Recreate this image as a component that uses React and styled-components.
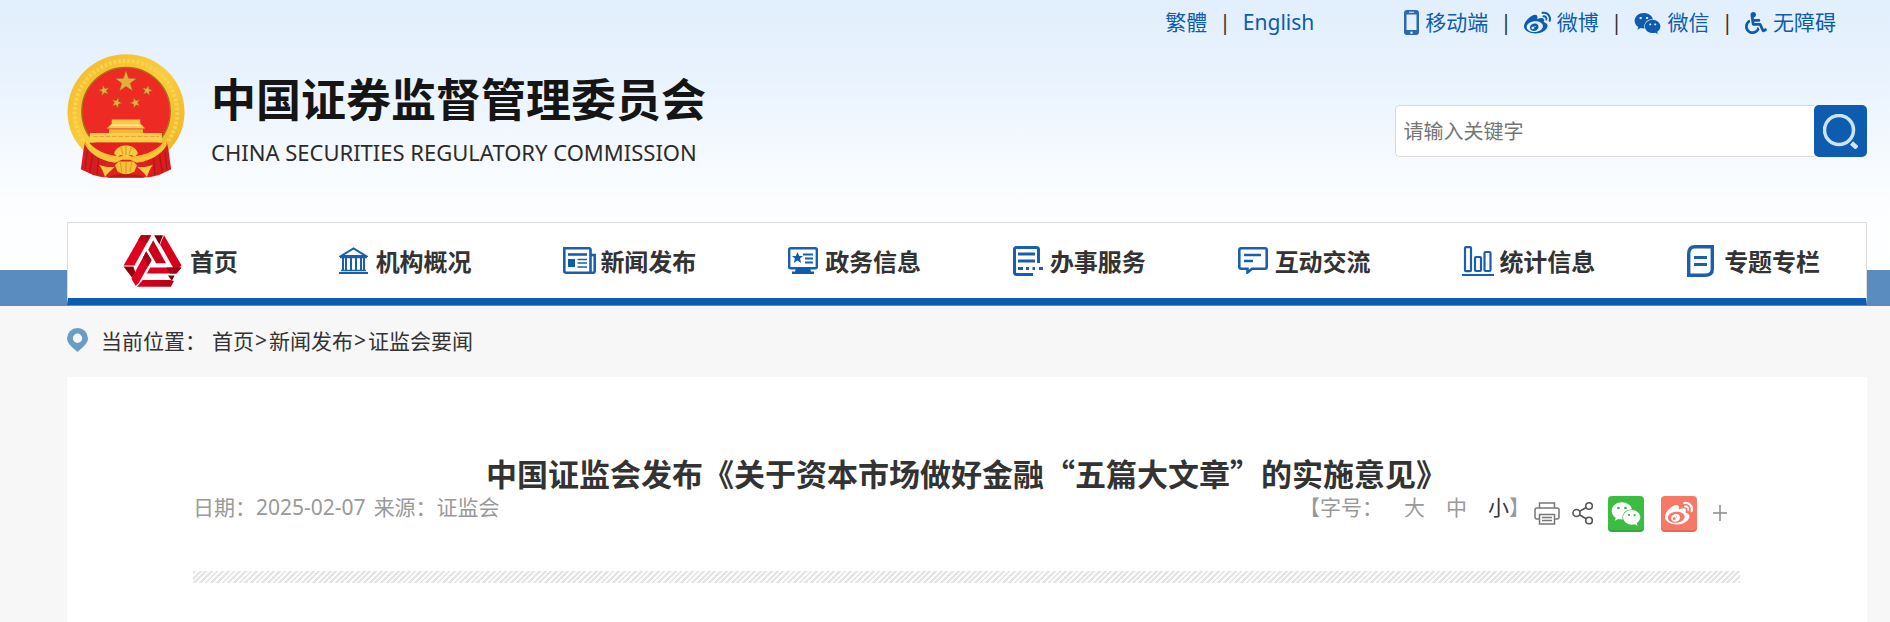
import styled, { createGlobalStyle } from "styled-components";
import { FaWeibo, FaWeixin, FaWheelchair } from "react-icons/fa";

const navItems = [
  { label: "首页", icon: HomeIcon, slot: 67 },
  { label: "机构概况", icon: BankIcon },
  { label: "新闻发布", icon: NewsIcon },
  { label: "政务信息", icon: ScreenIcon },
  { label: "办事服务", icon: ServiceIcon },
  { label: "互动交流", icon: ChatIcon },
  { label: "统计信息", icon: ChartIcon },
  { label: "专题专栏", icon: TopicIcon },
];

const App = () => {
  return (
    <>
      <GlobalStyle />
      <Page>
        <Header>
          <TopBar>
            <TopGroup>
              <TopLink href="#">繁體</TopLink>
              <Divider>|</Divider>
              <TopLink href="#">English</TopLink>
            </TopGroup>
            <TopGroup>
              <TopLink href="#">
                <PhoneIcon />
                移动端
              </TopLink>
              <Divider>|</Divider>
              <TopLink href="#">
                <FaWeibo size={27} />
                微博
              </TopLink>
              <Divider>|</Divider>
              <TopLink href="#">
                <FaWeixin size={27} />
                微信
              </TopLink>
              <Divider>|</Divider>
              <TopLink href="#">
                <FaWheelchair size={22} />
                无障碍
              </TopLink>
            </TopGroup>
          </TopBar>
          <Banner>
            <Brand href="#">
              <Emblem />
              <BrandText>
                <BrandName>中国证券监督管理委员会</BrandName>
                <BrandSub>CHINA SECURITIES REGULATORY COMMISSION</BrandSub>
              </BrandText>
            </Brand>
            <Search onSubmit={(e) => e.preventDefault()}>
              <SearchInput
                type="text"
                aria-label="请输入关键字"
                placeholder="请输入关键字"
              />
              <SearchButton type="submit" aria-label="搜索">
                <SearchIcon />
              </SearchButton>
            </Search>
          </Banner>
          <Nav>
            {navItems.map(({ label, icon: Icon, slot }) => (
              <NavLink href="#" key={label}>
                <IconSlot $width={slot}>
                  <Icon />
                </IconSlot>
                {label}
              </NavLink>
            ))}
          </Nav>
        </Header>
        <Main>
          <Breadcrumb>
            <PinIcon />
            <Current>当前位置：</Current>
            <a href="#">首页</a>
            <Arrow>&gt;</Arrow>
            <a href="#">新闻发布</a>
            <Arrow>&gt;</Arrow>
            <a href="#">证监会要闻</a>
          </Breadcrumb>
          <Article>
            <Title>中国证监会发布《关于资本市场做好金融“五篇大文章”的实施意见》</Title>
            <Meta>
              <Source>
                <span>日期：2025-02-07</span>
                <span>来源：证监会</span>
              </Source>
              <Tools>
                <FontSize>
                  <span>【字号：</span>
                  <SizeButton type="button">大</SizeButton>
                  <SizeButton type="button">中</SizeButton>
                  <span>
                    <SizeButton type="button" $active>
                      小
                    </SizeButton>
                    】
                  </span>
                </FontSize>
                <Share>
                  <ToolButton type="button" aria-label="打印">
                    <PrintIcon />
                  </ToolButton>
                  <ToolButton type="button" aria-label="分享">
                    <ShareIcon />
                  </ToolButton>
                  <ShareTile type="button" aria-label="微信" $color="#3bbd41">
                    <FaWeixin size={30} />
                  </ShareTile>
                  <ShareTile type="button" aria-label="微博" $color="#f67968">
                    <FaWeibo size={28} />
                  </ShareTile>
                  <ToolButton type="button" aria-label="更多">
                    <PlusIcon />
                  </ToolButton>
                </Share>
              </Tools>
            </Meta>
            <Stripe />
          </Article>
        </Main>
      </Page>
    </>
  );
};

function Star({ x, y, r, turn = 0 }) {
  const points = [];
  for (let i = 0; i < 10; i++) {
    const radius = i % 2 ? r * 0.4 : r;
    const angle = (i * Math.PI) / 5 - Math.PI / 2;
    points.push(`${radius * Math.cos(angle)},${radius * Math.sin(angle)}`);
  }
  return (
    <polygon
      points={points.join(" ")}
      transform={`translate(${x} ${y}) rotate(${turn})`}
      fill="#e3ae3c"
      stroke="#9c5a1c"
      strokeWidth="1.5"
    />
  );
}

function Emblem() {
  return (
    <svg width="118" height="124" viewBox="52 41 354 373" aria-hidden="true">
      <defs>
        <linearGradient id="gold" x1="0" y1="0" x2="1" y2="1">
          <stop offset="0" stopColor="#f3b92b" />
          <stop offset="0.5" stopColor="#f9cd3e" />
          <stop offset="1" stopColor="#eeb024" />
        </linearGradient>
      </defs>
      <path
        d="M229 42C327 42 405 120 405 216C405 262 386 303 356 332L306 378H152L102 332C72 303 53 262 53 216C53 120 131 42 229 42Z"
        fill="url(#gold)"
      />
      <circle cx="229" cy="216" r="154" fill="none" stroke="#f9d24e" strokeWidth="12" strokeDasharray="9 5" />
      <circle cx="229" cy="214" r="133" fill="#ee2a24" stroke="#a8701a" strokeWidth="4" />
      <Star x={229} y={125} r={34} />
      <Star x={163} y={151} r={17} turn={-12} />
      <Star x={293} y={151} r={17} turn={12} />
      <Star x={201} y={188} r={17} turn={20} />
      <Star x={257} y={188} r={17} turn={-20} />
      <path d="M186 238H272V250L287 265H171L186 250Z" fill="#f8c948" />
      <path d="M188 252H270L278 258H180Z" fill="#ffe58a" />
      <path d="M178 267H280V280H178Z" fill="#f0b93a" />
      <path d="M121 279H337V307H117Z" fill="#f9cf4b" />
      <path d="M130 289H328" stroke="#e5a62c" strokeWidth="3" strokeDasharray="14 5" />
      <path d="M118 308H340C316 336 276 350 229 350C182 350 142 336 118 308Z" fill="#e3221f" />
      <path d="M106 306C116 330 146 348 190 358L174 366L158 412L130 405L93 388C98 362 99 332 106 306Z" fill="#d91d1e" />
      <path d="M352 306C342 330 312 348 268 358L284 366L300 412L328 405L365 388C360 362 359 332 352 306Z" fill="#d91d1e" />
      <path d="M112 334L106 388M128 344L120 398M146 354L142 404M346 334L352 388M330 344L338 398M312 354L316 404" stroke="#b5141a" strokeWidth="4" />
      <path d="M150 378C190 352 268 352 308 378L300 412H158Z" fill="#e0201f" />
      <path d="M104 306C122 330 160 349 199 358L216 348H242L259 358C298 349 336 330 354 306C348 336 304 364 262 368L240 358H218L196 368C154 364 110 336 104 306Z" fill="#f7c53a" />
      <path d="M193 340C198 324 212 316 229 316C246 316 260 324 265 340L256 349L243 345L229 351L215 345L202 349Z" fill="#f8ca40" />
      <path d="M229 318V345M213 322L220 342M245 322L238 342" stroke="#d99622" strokeWidth="3" />
      <path d="M196 376L206 364H252L262 376L254 395L229 405L204 395Z" fill="#f5c237" />
      <path d="M212 368L217 396M229 366V402M246 368L241 396" stroke="#d99622" strokeWidth="3" />
      <path d="M148 374C166 382 182 382 196 380C184 391 171 400 166 412C162 397 156 384 148 374Z" fill="#f8cd45" />
      <path d="M310 374C292 382 276 382 262 380C274 391 287 400 292 412C296 397 302 384 310 374Z" fill="#f8cd45" />
      <path d="M172 413C192 399 266 399 286 413Z" fill="#b9151b" />
    </svg>
  );
}

function HomeIcon() {
  return (
    <svg width="59" height="52" viewBox="370 68 178 158" aria-hidden="true">
      <defs>
        <linearGradient id="redA" x1="0" y1="0" x2="1" y2="0">
          <stop offset="0" stopColor="#e3001f" />
          <stop offset="1" stopColor="#b00015" />
        </linearGradient>
      </defs>
      <path d="M424 69H455L404 161H371Z" fill="#e00020" />
      <path d="M424 69H455L442 92L415 84Z" fill="#b30014" />
      <path d="M371 164H401L407 182L397 198Z" fill="#8f000d" />
      <path d="M464 69H491L480 97Z" fill="#7d0009" />
      <path d="M494 69L547 160L530 182L482 97Z" fill="#d6001d" />
      <path d="M461 84L500 154H470L446 113Z" fill="#c90019" />
      <path d="M440 118L456 145L418 212L408 223L395 201Z" fill="#df001f" />
      <path d="M440 118L456 145L446 163L430 136Z" fill="#a80012" />
      <path d="M452 167H547L532 185H442Z" fill="#dd001e" />
      <path d="M502 167H547L532 185H512Z" fill="#9e0010" />
      <path d="M429 205H513L524 208L515 225H412Z" fill="url(#redA)" />
      <path d="M506 191H526L518 207Z" fill="#7d0009" />
    </svg>
  );
}

function BankIcon() {
  return (
    <svg width="29" height="27" viewBox="0 0 29 27" fill="none" stroke="#1a5fae" aria-hidden="true">
      <path d="M2 9L14.500 1.500L27 9Z" strokeWidth="2" />
      <path d="M1 10.500H28M2 23.500H27" strokeWidth="1.700" />
      <path d="M0 26H29" strokeWidth="2" />
      <path d="M4 11V24M7 11V24M12 11V24M17 11V24M22 11V24M25 11V24" strokeWidth="2" />
    </svg>
  );
}

function NewsIcon() {
  return (
    <svg width="33" height="27" viewBox="0 0 33 27" fill="none" stroke="#1a5fae" aria-hidden="true">
      <path d="M27 25.700H3Q1.300 25.700 1.300 24V1.300H26Q27.500 1.300 27.500 3V25.700H30Q31.700 25.700 31.700 24V8H28" strokeWidth="2.600" />
      <path d="M5 7.500H24" strokeWidth="2.600" />
      <rect x="5" y="12" width="7" height="8" fill="#0d5cb0" stroke="none" />
      <path d="M14.500 12.500H24M14.500 16H24M14.500 20H24" strokeWidth="1.400" />
    </svg>
  );
}

function ScreenIcon() {
  return (
    <svg width="30" height="27" viewBox="0 0 30 27" fill="none" stroke="#1a5fae" aria-hidden="true">
      <rect x="1.200" y="1.200" width="27.600" height="20" rx="1.500" strokeWidth="2.400" />
      <path d="M9.500 5L11.200 9H15L12 11.500L13.200 16L9.500 13.500L5.800 16L7 11.500L4 9H7.800Z" fill="#0d5cb0" stroke="none" />
      <path d="M15 7.500H25M17 11.500H25M17 15.500H25" strokeWidth="1.900" />
      <path d="M8 21H22L23 24.500H26V27H4V24.500H7Z" fill="#0d5cb0" stroke="none" />
    </svg>
  );
}

function ServiceIcon() {
  return (
    <svg width="30" height="30" viewBox="0 0 30 30" fill="none" stroke="#1a5fae" aria-hidden="true">
      <path d="M25.500 17V3.500Q25.500 1.500 23.500 1.500H3.500Q1.500 1.500 1.500 3.500V26Q1.500 28.500 3.500 28.500H20" strokeWidth="3" />
      <path d="M5 8H22M5 15H22M5 22.500H10" strokeWidth="2.800" />
      <path d="M13 22.500H16M19.500 22.500H22M26 22.500H30" strokeWidth="3" />
    </svg>
  );
}

function ChatIcon() {
  return (
    <svg width="30" height="27" viewBox="0 0 30 27" fill="none" stroke="#1a5fae" aria-hidden="true">
      <path d="M3 1.300H27Q28.700 1.300 28.700 3V19.500Q28.700 21.800 27 21.800H14L9.500 25.500V21.800H3Q1.300 21.800 1.300 19.500V3Q1.300 1.300 3 1.300Z" strokeWidth="2.600" />
      <path d="M6 8H23M6 14H15" strokeWidth="2.400" />
    </svg>
  );
}

function ChartIcon() {
  return (
    <svg width="32" height="30" viewBox="0 0 32 30" fill="none" stroke="#1a5fae" aria-hidden="true">
      <rect x="3" y="1.200" width="6" height="24" rx="1" strokeWidth="2.200" />
      <rect x="13" y="11" width="6" height="14" rx="1" strokeWidth="2.200" />
      <rect x="22.500" y="6" width="6" height="19" rx="1" strokeWidth="2.200" />
      <path d="M0 29H32" strokeWidth="2" />
    </svg>
  );
}

function TopicIcon() {
  return (
    <svg width="27" height="32" viewBox="0 0 27 32" fill="none" stroke="#1a5fae" aria-hidden="true">
      <path d="M8 1.700H25.300V24Q25.300 30.300 18 30.300H1.700V9Q1.700 1.700 8 1.700Z" strokeWidth="3.400" />
      <path d="M7 12.500H20M7 19.500H20" strokeWidth="3" />
    </svg>
  );
}

function PhoneIcon() {
  return (
    <svg width="15" height="26" viewBox="0 0 15 26" aria-hidden="true">
      <path
        d="M3 0H12Q15 0 15 3V22Q15 25 12 25H3Q0 25 0 22V3Q0 0 3 0ZM2.500 4.500V20H12.500V4.500ZM7.500 21.500A1.200 1.200 0 1 0 7.500 23.900A1.200 1.200 0 1 0 7.500 21.500ZM5 1.800V2.800H10V1.800Z"
        fill="#2a68b3"
        fillRule="evenodd"
      />
    </svg>
  );
}

function SearchIcon() {
  return (
    <svg width="35" height="35" viewBox="0 0 35 35" fill="none" stroke="#cfe2f7" aria-hidden="true">
      <circle cx="16" cy="16" r="14.500" strokeWidth="3.500" />
      <path d="M28.500 29L34 34" strokeWidth="4.500" />
    </svg>
  );
}

function PinIcon() {
  return (
    <svg width="21" height="24" viewBox="0 0 21 24" aria-hidden="true">
      <path
        d="M10.500 0A10.500 10.500 0 0 1 21 10.500C21 16 14.500 20 10.500 24C6.500 20 0 16 0 10.500A10.500 10.500 0 0 1 10.500 0ZM10.500 5.500A4.700 4.700 0 1 0 10.500 14.900A4.700 4.700 0 1 0 10.500 5.500Z"
        fill="#6a9cc6"
        fillRule="evenodd"
      />
    </svg>
  );
}

function PrintIcon() {
  return (
    <svg width="26" height="24" viewBox="0 1 26 24" fill="none" stroke="#777" strokeWidth="1.500" aria-hidden="true">
      <path d="M5.500 7V2H20.500V7" />
      <path d="M5.500 18H3Q1 18 1 16V9Q1 7 3 7H23Q25 7 25 9V16Q25 18 23 18H20.500" />
      <path d="M5.500 13.500H20.500V23H5.500ZM8 16.500H18M8 19.500H18" />
    </svg>
  );
}

function ShareIcon() {
  return (
    <svg width="21" height="24" viewBox="0 1 21 24" fill="none" stroke="#555" strokeWidth="1.600" aria-hidden="true">
      <circle cx="4.500" cy="12" r="3.500" />
      <circle cx="17" cy="5" r="3.300" />
      <circle cx="17" cy="19.500" r="3.300" />
      <path d="M7.500 10.200L14 6.800M7.500 13.800L14 17.700" />
    </svg>
  );
}

function PlusIcon() {
  return (
    <svg width="18" height="18" viewBox="-2 0 18 18" stroke="#8a8a8a" strokeWidth="1.500" aria-hidden="true">
      <path d="M0 8H14M7 0V16" />
    </svg>
  );
}

const GlobalStyle = createGlobalStyle`
  * {
    box-sizing: border-box;
  }

  body {
    margin: 0;
    font-family: "Noto Sans", "Noto Sans CJK SC", sans-serif;
    font-size: 21px;
    color: #333;
    background: #f7f7f7;
  }

  a {
    color: inherit;
    text-decoration: none;
  }

  button,
  input {
    font: inherit;
  }

  button {
    border: none;
    padding: 0;
    background: none;
    cursor: pointer;
  }

  svg {
    display: block;
    flex-shrink: 0;
  }
`;

const Page = styled.div`
  min-height: 100vh;
  display: flex;
  flex-direction: column;
`;

const Header = styled.header`
  padding: 0 23px 1px 67px;
  background:
    linear-gradient(#5b8cbf, #5b8cbf) bottom / 100% 36px no-repeat,
    linear-gradient(#e2effc, #e9f3fe 80px, #f6fafe 160px, #fdfeff 220px, #fff);
`;

const TopBar = styled.div`
  display: flex;
  justify-content: flex-end;
  gap: 90px;
  padding-right: 31px;
  line-height: 44px;
`;

const TopGroup = styled.div`
  display: flex;
  gap: 12px;
`;

const TopLink = styled.a`
  display: flex;
  align-items: center;
  gap: 6px;
  color: #0d5cb0;

  svg {
    margin-top: 2px;
  }
`;

const Divider = styled.span`
  color: #333;
`;

const Banner = styled.div`
  display: flex;
  justify-content: space-between;
  align-items: center;
  padding: 10px 0 44px;
`;

const Brand = styled.a`
  display: flex;
  align-items: center;
  gap: 26px;
  color: #151515;
`;

const BrandText = styled.span`
  display: flex;
  flex-direction: column;
  gap: 12px;
  padding-top: 4px;
`;

const BrandName = styled.span`
  font-size: 45px;
  font-weight: bold;
  line-height: 56px;
`;

const BrandSub = styled.span`
  font-size: 22px;
  line-height: 24px;
  color: #2b2b2b;
`;

const Search = styled.form`
  display: flex;
  width: 25vw;
  height: 52px;
  margin-top: 30px;
`;

const SearchInput = styled.input`
  flex: 1;
  min-width: 0;
  padding: 0 8px;
  border: 1px solid #d9d9d9;
  border-right: none;
  border-radius: 5px 0 0 5px;
  background: #fff;
  font-size: 20px;
  outline: none;

  &::placeholder {
    color: #757575;
  }
`;

const SearchButton = styled.button`
  display: flex;
  align-items: center;
  justify-content: center;
  width: 53px;
  border-radius: 5px;
  background: #0d5cb0;
`;

const Nav = styled.nav`
  display: grid;
  grid-template-columns: repeat(8, 1fr);
  border: 1px solid #dcdcdc;
  border-bottom: 7px solid #0d5cb0;
  background: #fff;
`;

const NavLink = styled.a`
  display: flex;
  align-items: center;
  justify-content: center;
  height: 75px;
  font-size: 24px;
  font-weight: bold;
`;

const IconSlot = styled.span`
  width: ${({ $width }) => $width || 37}px;
`;

const Main = styled.main`
  flex: 1;
  display: flex;
  flex-direction: column;
  padding: 0 23px 0 67px;
`;

const Breadcrumb = styled.div`
  display: flex;
  align-items: center;
  height: 71px;
  padding-bottom: 3px;
`;

const Current = styled.span`
  margin: 0 6px 0 13px;
`;

const Arrow = styled.span`
  padding: 0 2px 0 1px;
`;

const Article = styled.article`
  flex: 1;
  padding: 77px 127px 0 126px;
  background: #fff;
`;

const Title = styled.h1`
  margin: 0;
  font-family: "Noto Sans CJK SC", sans-serif;
  font-size: 31px;
  line-height: 38px;
  text-align: center;
`;

const Meta = styled.div`
  display: flex;
  justify-content: space-between;
  line-height: 30px;
  color: #999;
`;

const Source = styled.div`
  display: flex;
  gap: 8px;
`;

const Tools = styled.div`
  display: flex;
  padding-right: 11px;
`;

const FontSize = styled.div`
  display: flex;
  align-items: flex-start;
  gap: 21px;
`;

const SizeButton = styled.button`
  line-height: 30px;
  color: ${({ $active }) => ($active ? "#333" : "#999")};
`;

const Share = styled.div`
  display: flex;
  align-items: center;
  gap: 12px;
  padding-top: 4px;
  margin-left: 4px;
`;

const ToolButton = styled.button`
  display: flex;
`;

const ShareTile = styled.button`
  display: flex;
  align-items: center;
  justify-content: center;
  width: 36px;
  height: 36px;
  margin: 0 2px 0 3px;
  border-radius: 4px;
  background: ${({ $color }) => $color};
  box-shadow: inset 0 -2px 0 rgba(0, 0, 0, 0.1);
  color: #fff;
`;

const Stripe = styled.div`
  height: 12px;
  margin-top: 39px;
  background: repeating-linear-gradient(
    -45deg,
    #e4e4e4 0 2px,
    #fcfcfc 2px 4px
  );
`;

export default App;
